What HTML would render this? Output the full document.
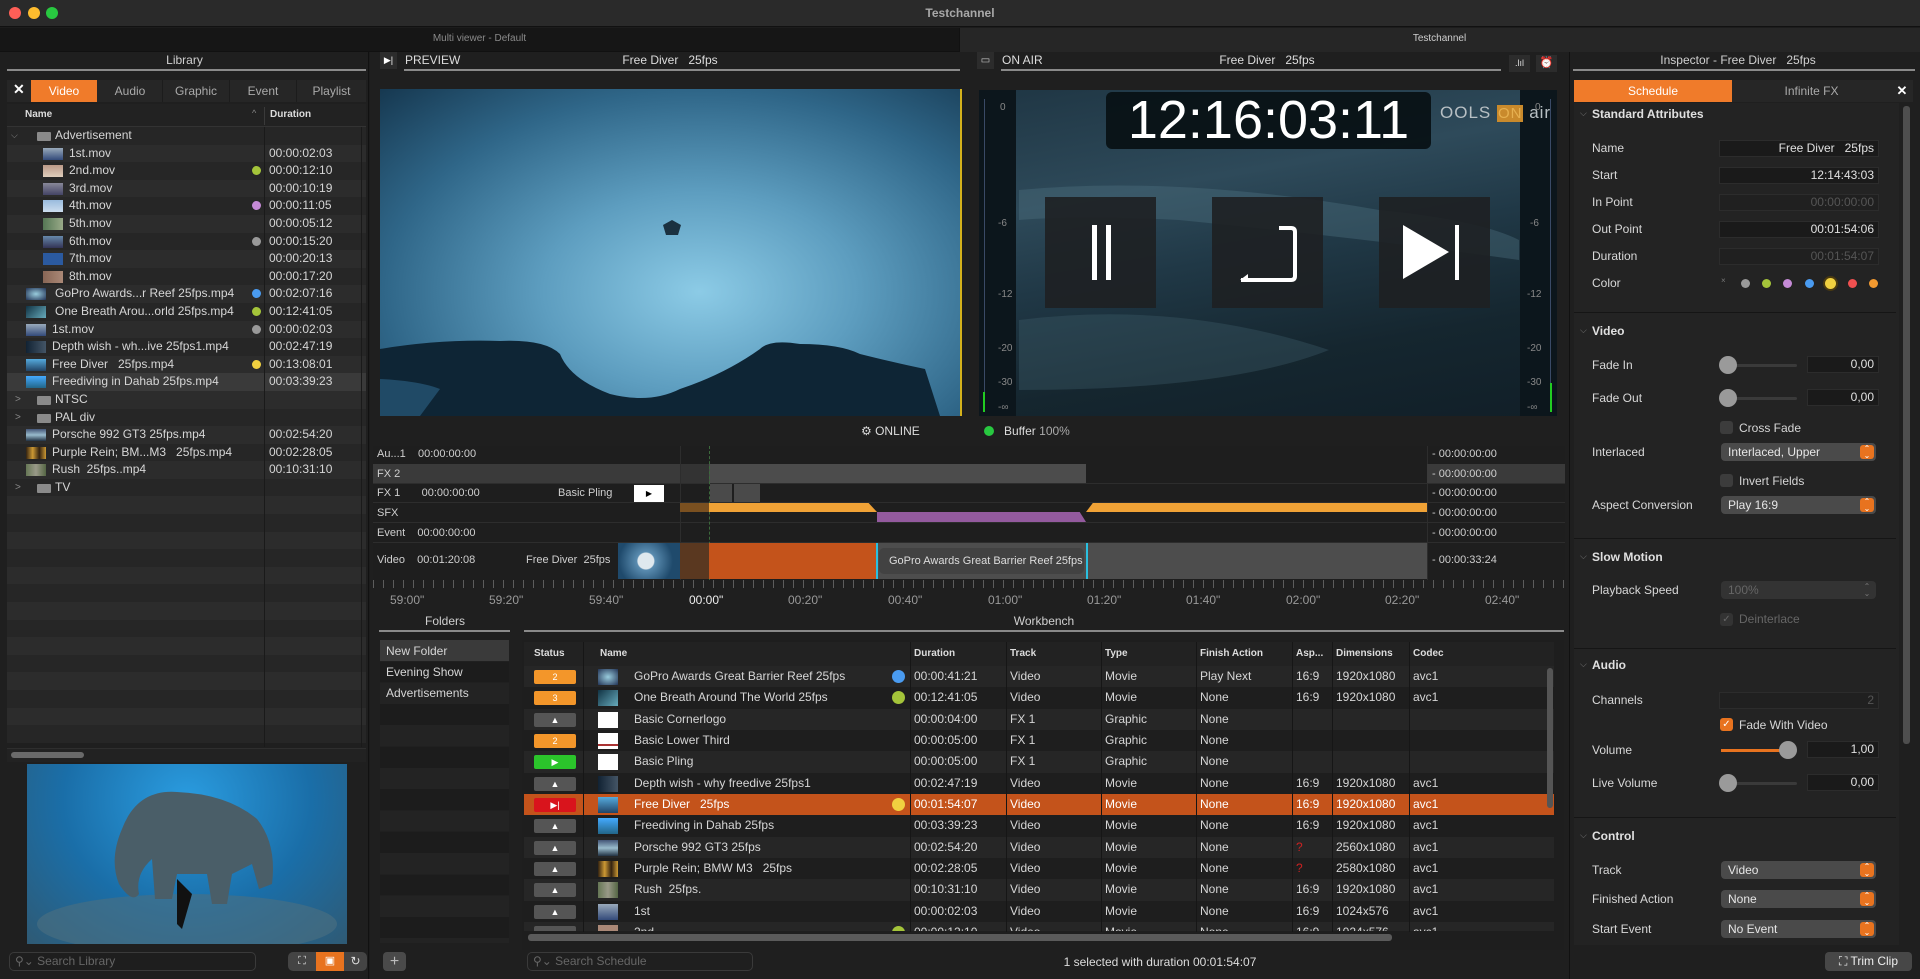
<!DOCTYPE html>
<html><head><meta charset="utf-8">
<style>
*{box-sizing:border-box;margin:0;padding:0}
body{width:1920px;height:979px;overflow:hidden;background:#1c1c1c;font-family:"Liberation Sans",sans-serif;font-size:12px;color:#d6d6d6;position:relative}
.a{position:absolute}
.hdr{position:absolute;text-align:center;color:#d0d0d0;font-size:12px}
.ul{position:absolute;height:2px;background:#8a8a8a}
.lr{height:17.6px;line-height:17.6px;position:relative;white-space:nowrap}
.lr:nth-child(odd){background:#262626}.lr:nth-child(even){background:#2c2c2c}
.lr span{position:absolute}
.th{position:absolute;top:3px;width:20px;height:12px}
.dot{position:absolute;width:9px;height:9px;border-radius:50%;top:4px;left:245px}
.du{left:262px}
.fo{position:absolute;left:30px;top:5px;width:14px;height:9px;background:#8a8a8a;border-radius:1px}
.wr{height:21.33px;line-height:21.33px;position:relative;white-space:nowrap;font-size:12px}
.wr:nth-child(odd){background:#262626}.wr:nth-child(even){background:#1e1e1e}
.wr span{position:absolute}
.bd{position:absolute;left:10px;top:4px;width:42px;height:14px;border-radius:2px;color:#fff;font-size:9px;line-height:14px;text-align:center}
.wt{position:absolute;left:74px;top:3px;width:20px;height:16px}
.lab{position:absolute;left:1592px;color:#d8d8d8;font-size:12px}
.sec{position:absolute;left:1592px;font-weight:bold;color:#e0e0e0;font-size:12px}
.chev{position:absolute;left:1580px;color:#777;font-size:9px}
.fld{position:absolute;left:1719px;width:160px;height:17px;background:#1a1a1a;border:1px solid #2c2c2c;text-align:right;padding-right:4px;line-height:15px;color:#e0e0e0}
.pop{position:absolute;left:1721px;width:155px;height:18px;background:#4a4a4a;border-radius:4px;line-height:18px;padding-left:7px;color:#e6e6e6}
.pop i{position:absolute;right:2px;top:2px;width:14px;height:14px;background:#e8731f;border-radius:3px;font-style:normal;font-size:8px;line-height:7px;text-align:center;color:#fff}
.sl{position:absolute;left:1721px;width:76px;height:3px;background:#3a3a3a;border-radius:2px}
.kn{position:absolute;width:18px;height:18px;border-radius:50%;background:#9a9a9a}
.sep{position:absolute;left:1574px;width:322px;height:1px;background:#151515}
.cb{position:absolute;width:13px;height:13px;border-radius:3px;background:#3c3c3c}
.tl{position:absolute;color:#cfcfcf;font-size:11px}
.rl{position:absolute;top:593px;color:#999;font-size:12px}
</style></head><body>

<div class="a" style="left:0;top:0;width:1920px;height:27px;background:#2a2a2a;border-bottom:1px solid #111"></div>
<div class="a" style="left:9px;top:7px;width:12px;height:12px;border-radius:50%;background:#fe5f57"></div>
<div class="a" style="left:28px;top:7px;width:12px;height:12px;border-radius:50%;background:#febc2e"></div>
<div class="a" style="left:46px;top:7px;width:12px;height:12px;border-radius:50%;background:#28c840"></div>
<div class="a" style="left:0;top:6px;width:1920px;text-align:center;font-weight:bold;color:#a8a8a8;font-size:12px">Testchannel</div>
<div class="a" style="left:0;top:28px;width:959px;height:24px;background:#161616;border-bottom:1px solid #111"></div>
<div class="a" style="left:959px;top:28px;width:961px;height:24px;background:#262626;border-left:1px solid #111"></div>
<div class="a" style="left:0;top:33px;width:959px;text-align:center;color:#8a8a8a;font-size:10px">Multi viewer - Default</div>
<div class="a" style="left:959px;top:33px;width:961px;text-align:center;color:#cfcfcf;font-size:10px">Testchannel</div>

<!-- LIBRARY -->
<div class="a" style="left:0;top:52px;width:369px;height:927px;background:#1f1f1f;border-right:1px solid #111"></div>
<div class="hdr" style="left:0;top:53px;width:369px">Library</div>
<div class="ul" style="left:7px;top:69px;width:359px"></div>
<div class="a" style="left:7px;top:80px;width:359px;height:22px;background:#262626"></div>
<div class="a" style="left:13px;top:81px;color:#fff;font-size:14px;font-weight:bold">✕</div>
<div class="a" style="left:31px;top:80px;width:66px;height:22px;background:#f07b2a;color:#fff;text-align:center;line-height:22px;font-size:12px">Video</div>
<div class="a" style="left:98px;top:80px;width:65px;line-height:22px;text-align:center;color:#aaa;border-right:1px solid #1c1c1c">Audio</div>
<div class="a" style="left:163px;top:80px;width:67px;line-height:22px;text-align:center;color:#aaa;border-right:1px solid #1c1c1c">Graphic</div>
<div class="a" style="left:230px;top:80px;width:67px;line-height:22px;text-align:center;color:#aaa;border-right:1px solid #1c1c1c">Event</div>
<div class="a" style="left:297px;top:80px;width:69px;line-height:22px;text-align:center;color:#aaa">Playlist</div>
<div class="a" style="left:7px;top:104px;width:359px;height:23px;background:#222;border-bottom:1px solid #333"></div>
<div class="a" style="left:25px;top:109px;font-weight:bold;font-size:10px;color:#ddd">Name</div>
<div class="a" style="left:252px;top:108px;font-size:9px;color:#888">^</div>
<div class="a" style="left:264px;top:107px;width:1px;height:18px;background:#3a3a3a"></div>
<div class="a" style="left:270px;top:109px;font-weight:bold;font-size:10px;color:#ddd">Duration</div>

<div class="a" style="left:7px;top:127px;width:359px;font-size:12px">
<div class="lr"><span style="left:4px;color:#888;font-size:9px">⌵</span><div class="fo"></div><span style="left:48px">Advertisement</span></div>
<div class="lr"><div class="th" style="left:36px;background:linear-gradient(#9ab,#334a7a)"></div><span style="left:62px">1st.mov</span><span class="du">00:00:02:03</span></div>
<div class="lr"><div class="th" style="left:36px;background:linear-gradient(#b98,#dcb)"></div><span style="left:62px">2nd.mov</span><div class="dot" style="background:#a4c43a"></div><span class="du">00:00:12:10</span></div>
<div class="lr"><div class="th" style="left:36px;background:linear-gradient(#889,#446)"></div><span style="left:62px">3rd.mov</span><span class="du">00:00:10:19</span></div>
<div class="lr"><div class="th" style="left:36px;background:linear-gradient(#9bd,#cde)"></div><span style="left:62px">4th.mov</span><div class="dot" style="background:#c58ad6"></div><span class="du">00:00:11:05</span></div>
<div class="lr"><div class="th" style="left:36px;background:linear-gradient(90deg,#575,#9a8)"></div><span style="left:62px">5th.mov</span><span class="du">00:00:05:12</span></div>
<div class="lr"><div class="th" style="left:36px;background:linear-gradient(#68a,#335)"></div><span style="left:62px">6th.mov</span><div class="dot" style="background:#999"></div><span class="du">00:00:15:20</span></div>
<div class="lr"><div class="th" style="left:36px;background:#2b5aa0"></div><span style="left:62px">7th.mov</span><span class="du">00:00:20:13</span></div>
<div class="lr"><div class="th" style="left:36px;background:linear-gradient(90deg,#865,#a87)"></div><span style="left:62px">8th.mov</span><span class="du">00:00:17:20</span></div>
<div class="lr"><div class="th" style="left:19px;background:radial-gradient(#9cd,#235)"></div><span style="left:48px">GoPro Awards...r Reef 25fps.mp4</span><div class="dot" style="background:#4a9bf0"></div><span class="du">00:02:07:16</span></div>
<div class="lr"><div class="th" style="left:19px;background:linear-gradient(135deg,#134,#6ab)"></div><span style="left:48px">One Breath Arou...orld 25fps.mp4</span><div class="dot" style="background:#a4c43a"></div><span class="du">00:12:41:05</span></div>
<div class="lr"><div class="th" style="left:19px;background:linear-gradient(#9ab,#334a7a)"></div><span style="left:45px">1st.mov</span><div class="dot" style="background:#999"></div><span class="du">00:00:02:03</span></div>
<div class="lr"><div class="th" style="left:19px;background:linear-gradient(90deg,#123,#456)"></div><span style="left:45px">Depth wish - wh...ive 25fps1.mp4</span><span class="du">00:02:47:19</span></div>
<div class="lr"><div class="th" style="left:19px;background:linear-gradient(#5ad,#246)"></div><span style="left:45px">Free Diver &nbsp; 25fps.mp4</span><div class="dot" style="background:#f0d040"></div><span class="du">00:13:08:01</span></div>
<div class="lr" style="background:#3a3a3a"><div class="th" style="left:19px;background:linear-gradient(#4af,#268)"></div><span style="left:45px">Freediving in Dahab 25fps.mp4</span><span class="du">00:03:39:23</span></div>
<div class="lr"><span style="left:8px;color:#888;font-size:10px">&gt;</span><div class="fo"></div><span style="left:48px">NTSC</span></div>
<div class="lr"><span style="left:8px;color:#888;font-size:10px">&gt;</span><div class="fo"></div><span style="left:48px">PAL div</span></div>
<div class="lr"><div class="th" style="left:19px;background:linear-gradient(#457,#9bc,#234)"></div><span style="left:45px">Porsche 992 GT3 25fps.mp4</span><span class="du">00:02:54:20</span></div>
<div class="lr"><div class="th" style="left:19px;background:linear-gradient(90deg,#321,#c93,#321,#c93)"></div><span style="left:45px">Purple Rein; BM...M3 &nbsp; 25fps.mp4</span><span class="du">00:02:28:05</span></div>
<div class="lr"><div class="th" style="left:19px;background:linear-gradient(90deg,#675,#998,#564)"></div><span style="left:45px">Rush &nbsp;25fps..mp4</span><span class="du">00:10:31:10</span></div>
<div class="lr"><span style="left:8px;color:#888;font-size:10px">&gt;</span><div class="fo"></div><span style="left:48px">TV</span></div>
<div class="lr"></div><div class="lr"></div><div class="lr"></div><div class="lr"></div><div class="lr"></div><div class="lr"></div><div class="lr"></div><div class="lr"></div><div class="lr"></div><div class="lr"></div><div class="lr"></div><div class="lr"></div><div class="lr"></div><div class="lr"></div>
</div>
<div class="a" style="left:264px;top:127px;width:1px;height:620px;background:#1a1a1a"></div>
<div class="a" style="left:361px;top:127px;width:1px;height:620px;background:#1a1a1a"></div>
<div class="a" style="left:7px;top:748px;width:359px;height:14px;background:#222;border-top:1px solid #2e2e2e"></div>
<div class="a" style="left:11px;top:752px;width:73px;height:6px;border-radius:3px;background:#6a6a6a"></div>
<div class="a" style="left:27px;top:764px;width:320px;height:180px;background:radial-gradient(ellipse at 50% 20%,#2a9ce0,#1a6ea8 55%,#2f5a74 100%)"></div>
<svg class="a" style="left:27px;top:764px" width="320" height="180"><ellipse cx="160" cy="160" rx="150" ry="30" fill="#4d6f80" opacity=".6"/><path d="M95 65 Q110 25 150 28 Q200 30 230 55 Q250 80 245 120 L232 125 L225 100 L205 110 L200 140 L185 140 L180 110 L150 110 L145 135 L128 135 L125 95 Q108 110 112 130 Q105 140 92 120 Q82 95 95 65Z" fill="#4a5e68"/><path d="M150 115 L165 130 L155 165 L150 160 Z" fill="#111"/></svg>
<div class="a" style="left:9px;top:952px;width:247px;height:19px;border:1px solid #3a3a3a;border-radius:5px;background:#1e1e1e;color:#666;line-height:17px;padding-left:5px;font-size:12px">⚲⌄ Search Library</div>
<div class="a" style="left:288px;top:952px;width:28px;height:19px;background:#444;border-radius:5px 0 0 5px;color:#ddd;text-align:center;line-height:19px;font-size:11px">⛶</div>
<div class="a" style="left:316px;top:952px;width:28px;height:19px;background:#e8731f;color:#fff;text-align:center;line-height:19px;font-size:11px">▣</div>
<div class="a" style="left:344px;top:952px;width:23px;height:19px;background:#444;border-radius:0 5px 5px 0;color:#ddd;text-align:center;line-height:19px;font-size:12px">↻</div>

<!-- CENTER -->
<div class="a" style="left:370px;top:52px;width:1199px;height:927px;background:#1f1f1f"></div>
<div class="a" style="left:380px;top:52px;width:17px;height:17px;background:#2c2c2c;color:#fff;font-size:9px;text-align:center;line-height:17px">▶|</div>
<div class="a" style="left:405px;top:53px;color:#ddd">PREVIEW</div>
<div class="a" style="left:600px;top:53px;width:140px;text-align:center;color:#ddd">Free Diver &nbsp; 25fps</div>
<div class="ul" style="left:404px;top:69px;width:556px"></div>
<div class="a" style="left:380px;top:89px;width:581px;height:327px;background:radial-gradient(ellipse at 55% 62%,#8ccbe6 0%,#5d9dbf 35%,#2f6688 70%,#163850 100%)"></div>
<svg class="a" style="left:380px;top:89px" width="581" height="327"><path d="M0 260 Q60 250 120 252 Q165 250 180 265 Q190 290 230 305 Q270 315 300 300 Q345 285 380 260 Q390 250 420 255 Q460 255 480 265 Q520 275 545 280 L560 327 L0 327Z" fill="#0e2535"/><path d="M0 290 Q40 292 60 300 L40 327 L0 327Z" fill="#204a66"/><path d="M283 136 L292 131 L301 136 L298 146 L286 146Z" fill="#1b3140"/></svg>
<div class="a" style="left:960px;top:89px;width:2px;height:327px;background:#d4b21c"></div>
<div class="a" style="left:861px;top:424px;color:#ddd;font-size:12px">⚙ ONLINE</div>
<div class="a" style="left:977px;top:52px;width:17px;height:17px;background:#2c2c2c;color:#ccc;font-size:10px;text-align:center;line-height:17px">▭</div>
<div class="a" style="left:1002px;top:53px;color:#ddd">ON AIR</div>
<div class="a" style="left:1197px;top:53px;width:140px;text-align:center;color:#ddd">Free Diver &nbsp; 25fps</div>
<div class="ul" style="left:1001px;top:69px;width:500px"></div>
<div class="a" style="left:1509px;top:55px;width:21px;height:17px;background:#2c2c2c;color:#ddd;font-size:9px;text-align:center;line-height:17px">.lıl</div>
<div class="a" style="left:1536px;top:55px;width:21px;height:17px;background:#2c2c2c;color:#ddd;font-size:11px;text-align:center;line-height:17px">⏰</div>
<div class="a" style="left:979px;top:90px;width:578px;height:326px;background:linear-gradient(170deg,#1f3644 0%,#2e4a5a 30%,#203846 50%,#15262f 75%,#111f28 100%)"></div>
<svg class="a" style="left:979px;top:90px" width="578" height="326"><path d="M40 100 Q200 85 400 120 Q500 130 540 150 L540 170 Q400 150 200 130 Q100 125 40 130Z" fill="#4e7080" opacity=".4"/><path d="M40 230 Q200 210 350 260 Q250 300 40 300Z" fill="#3c5a66" opacity=".4"/></svg>
<div class="a" style="left:979px;top:90px;width:37px;height:326px;background:#0c161c"></div>
<div class="a" style="left:1520px;top:90px;width:37px;height:326px;background:#0c161c"></div>
<div class="a" style="left:984px;top:99px;width:1px;height:313px;background:#3a4a66"></div>
<div class="a" style="left:1550px;top:99px;width:1px;height:313px;background:#3a4a66"></div>
<div class="a" style="left:983px;top:392px;width:2px;height:20px;background:#2c2"></div>
<div class="a" style="left:1550px;top:383px;width:2px;height:29px;background:#2c2"></div>
<div class="tl" style="left:1000px;top:102px;color:#888;font-size:10px">0</div>
<div class="tl" style="left:998px;top:218px;color:#888;font-size:10px">-6</div>
<div class="tl" style="left:998px;top:289px;color:#888;font-size:10px">-12</div>
<div class="tl" style="left:998px;top:343px;color:#888;font-size:10px">-20</div>
<div class="tl" style="left:998px;top:377px;color:#888;font-size:10px">-30</div>
<div class="tl" style="left:998px;top:402px;color:#888;font-size:10px">-∞</div>
<div class="tl" style="left:1535px;top:102px;color:#888;font-size:10px">0</div>
<div class="tl" style="left:1530px;top:218px;color:#888;font-size:10px">-6</div>
<div class="tl" style="left:1527px;top:289px;color:#888;font-size:10px">-12</div>
<div class="tl" style="left:1527px;top:343px;color:#888;font-size:10px">-20</div>
<div class="tl" style="left:1527px;top:377px;color:#888;font-size:10px">-30</div>
<div class="tl" style="left:1527px;top:402px;color:#888;font-size:10px">-∞</div>
<div class="a" style="left:1440px;top:103px;color:#b8c0c4;font-size:17px;letter-spacing:1px">OOLS <span style="background:#c98a2c;color:#e6b050;padding:0 1px;font-size:15px">ON</span> air</div>
<div class="a" style="left:1106px;top:92px;width:325px;height:57px;background:rgba(8,16,20,.92);border-radius:6px;color:#fff;font-size:54px;line-height:57px;text-align:center;font-weight:300">12:16:03:11</div>
<div class="a" style="left:1045px;top:197px;width:111px;height:111px;background:rgba(30,32,34,.9)"></div>
<div class="a" style="left:1092px;top:225px;width:5px;height:55px;background:#fff"></div>
<div class="a" style="left:1106px;top:225px;width:5px;height:55px;background:#fff"></div>
<div class="a" style="left:1212px;top:197px;width:111px;height:111px;background:rgba(30,32,34,.9)"></div>
<svg class="a" style="left:1212px;top:197px" width="111" height="111"><path d="M67 31 H79 Q83 31 83 35 V79 Q83 83 79 83 H29" fill="none" stroke="#fff" stroke-width="4"/><path d="M28 83 L36 77 L36 83Z" fill="#fff"/></svg>
<div class="a" style="left:1379px;top:197px;width:111px;height:111px;background:rgba(30,32,34,.9)"></div>
<svg class="a" style="left:1379px;top:197px" width="111" height="111"><path d="M24 28 L70 55 L24 82Z" fill="#fff"/><rect x="76" y="28" width="4" height="55" fill="#fff"/></svg>
<div class="a" style="left:984px;top:426px;width:10px;height:10px;border-radius:50%;background:#28c840"></div>
<div class="a" style="left:1004px;top:424px;color:#ddd">Buffer <span style="color:#aaa">100%</span></div>

<!-- TIMELINE -->
<div class="a" style="left:373px;top:446px;width:1192px;height:134px;background:#1e1e1e"></div>
<div class="a" style="left:373px;top:464px;width:1192px;height:19px;background:#3c3c3c"></div>
<div class="a" style="left:680px;top:464px;width:30px;height:19px;background:#333"></div>
<div class="a" style="left:709px;top:464px;width:377px;height:19px;background:#4c4c4c"></div>
<div class="a" style="left:1086px;top:464px;width:341px;height:19px;background:#1e1e1e"></div>
<div class="a" style="left:373px;top:464px;width:307px;height:19px;background:#3a3a3a"></div>
<div class="a" style="left:373px;top:483px;width:1192px;height:1px;background:#2d2d2d"></div>
<div class="a" style="left:373px;top:502px;width:1192px;height:1px;background:#2d2d2d"></div>
<div class="a" style="left:373px;top:522px;width:1192px;height:1px;background:#2d2d2d"></div>
<div class="a" style="left:373px;top:542px;width:1192px;height:1px;background:#2d2d2d"></div>
<div class="a" style="left:680px;top:446px;width:1px;height:134px;background:#2d2d2d"></div>
<div class="a" style="left:709px;top:446px;width:1px;height:134px;border-left:1px dashed #3c6a3c"></div>
<div class="a" style="left:1427px;top:446px;width:1px;height:134px;background:#2d2d2d"></div>
<div class="tl" style="left:377px;top:448px">Au...1 &nbsp;&nbsp;&nbsp;00:00:00:00</div>
<div class="tl" style="left:377px;top:468px">FX 2</div>
<div class="tl" style="left:377px;top:487px">FX 1 &nbsp;&nbsp;&nbsp;&nbsp;&nbsp;&nbsp;00:00:00:00</div>
<div class="tl" style="left:558px;top:487px">Basic Pling</div>
<div class="a" style="left:634px;top:485px;width:30px;height:17px;background:#fff;color:#000;font-size:8px;text-align:center;line-height:17px">▶</div>
<div class="a" style="left:710px;top:484px;width:22px;height:18px;background:#4a4a4a"></div>
<div class="a" style="left:734px;top:484px;width:26px;height:18px;background:#4a4a4a"></div>
<div class="tl" style="left:377px;top:507px">SFX</div>
<div class="a" style="left:680px;top:503px;width:29px;height:9px;background:#7a5020"></div>
<div class="a" style="left:709px;top:503px;width:168px;height:9px;background:#f0a236;clip-path:polygon(0 0,95% 0,100% 100%,0 100%)"></div>
<div class="a" style="left:877px;top:512px;width:209px;height:10px;background:#935a9e;clip-path:polygon(0 0,97% 0,100% 100%,0 100%)"></div>
<div class="a" style="left:1086px;top:503px;width:341px;height:9px;background:#f0a236;clip-path:polygon(2% 0,100% 0,100% 100%,0 100%)"></div>
<div class="tl" style="left:377px;top:527px">Event &nbsp;&nbsp;&nbsp;00:00:00:00</div>
<div class="tl" style="left:377px;top:554px">Video &nbsp;&nbsp;&nbsp;00:01:20:08</div>
<div class="tl" style="left:526px;top:554px">Free Diver &nbsp;25fps</div>
<div class="a" style="left:618px;top:543px;width:62px;height:36px;background:radial-gradient(circle at 45% 50%,#dfe8ee 0 8px,#5a8cb0 9px,#1f4a6c 70%)"></div>
<div class="a" style="left:680px;top:543px;width:29px;height:36px;background:#5a3820"></div>
<div class="a" style="left:709px;top:543px;width:168px;height:36px;background:#c4531b"></div>
<div class="a" style="left:877px;top:543px;width:550px;height:36px;background:#4d4d4d"></div>
<div class="a" style="left:879px;top:548px;width:205px;height:26px;background:#424242;border-radius:5px;color:#ddd;font-size:11px;line-height:26px;padding-left:10px">GoPro Awards Great Barrier Reef 25fps</div>
<div class="a" style="left:875px;top:543px;width:3px;height:36px;border-right:2px solid #2ac0e0"></div>
<div class="a" style="left:1086px;top:543px;width:12px;height:36px;border-left:2px solid #2ac0e0"></div>
<div class="tl" style="left:1432px;top:448px">- 00:00:00:00</div>
<div class="a" style="left:1427px;top:464px;width:138px;height:19px;background:#3a3a3a"></div>
<div class="tl" style="left:1432px;top:468px">- 00:00:00:00</div>
<div class="tl" style="left:1432px;top:487px">- 00:00:00:00</div>
<div class="tl" style="left:1432px;top:507px">- 00:00:00:00</div>
<div class="tl" style="left:1432px;top:527px">- 00:00:00:00</div>
<div class="tl" style="left:1432px;top:554px">- 00:00:33:24</div>
<div class="a" style="left:373px;top:580px;width:1192px;height:8px;background:repeating-linear-gradient(90deg,#777 0 1px,transparent 1px 10px);opacity:.7"></div>
<div class="rl" style="left:390px">59:00"</div>
<div class="rl" style="left:489px">59:20"</div>
<div class="rl" style="left:589px">59:40"</div>
<div class="rl" style="left:689px;color:#eee">00:00"</div>
<div class="rl" style="left:788px">00:20"</div>
<div class="rl" style="left:888px">00:40"</div>
<div class="rl" style="left:988px">01:00"</div>
<div class="rl" style="left:1087px">01:20"</div>
<div class="rl" style="left:1186px">01:40"</div>
<div class="rl" style="left:1286px">02:00"</div>
<div class="rl" style="left:1385px">02:20"</div>
<div class="rl" style="left:1485px">02:40"</div>

<!-- FOLDERS -->
<div class="hdr" style="left:380px;top:614px;width:130px">Folders</div>
<div class="ul" style="left:379px;top:630px;width:131px"></div>
<div class="a" style="left:380px;top:640px;width:129px;height:303px;background:repeating-linear-gradient(#232323 0 21.3px,#1c1c1c 21.3px 42.6px)"></div>
<div class="a" style="left:380px;top:640px;width:129px;height:21px;background:#3a3a3a"></div>
<div class="a" style="left:386px;top:644px">New Folder</div>
<div class="a" style="left:386px;top:665px">Evening Show</div>
<div class="a" style="left:386px;top:686px">Advertisements</div>
<div class="a" style="left:383px;top:952px;width:23px;height:19px;background:#4a4a4a;border-radius:4px;color:#bbb;text-align:center;line-height:19px;font-size:16px">+</div>

<!-- WORKBENCH -->
<div class="hdr" style="left:524px;top:614px;width:1040px">Workbench</div>
<div class="ul" style="left:524px;top:630px;width:1040px"></div>
<div class="a" style="left:522px;top:640px;width:1042px;height:310px;background:#1e1e1e"></div>
<div class="a" style="left:524px;top:642px;width:1030px;height:24px;background:#222;font-weight:bold;font-size:10px;color:#ddd;line-height:24px">
<span class="a" style="left:10px">Status</span><span class="a" style="left:76px">Name</span><span class="a" style="left:390px">Duration</span><span class="a" style="left:486px">Track</span><span class="a" style="left:581px">Type</span><span class="a" style="left:676px">Finish Action</span><span class="a" style="left:772px">Asp...</span><span class="a" style="left:812px">Dimensions</span><span class="a" style="left:889px">Codec</span></div>
<div class="a" style="left:524px;top:666px;width:1030px;height:265px;overflow:hidden">
<div class="wr"><div class="bd" style="background:#f3962a">2</div><div class="wt" style="background:radial-gradient(#9cd,#235)"></div><span style="left:110px">GoPro Awards Great Barrier Reef 25fps</span><span style="left:368px;top:4px;width:13px;height:13px;border-radius:50%;background:#4a9bf0"></span><span style="left:390px">00:00:41:21</span><span style="left:486px">Video</span><span style="left:581px">Movie</span><span style="left:676px">Play Next</span><span style="left:772px">16:9</span><span style="left:812px">1920x1080</span><span style="left:889px">avc1</span></div>
<div class="wr"><div class="bd" style="background:#f3962a">3</div><div class="wt" style="background:linear-gradient(135deg,#134,#6ab)"></div><span style="left:110px">One Breath Around The World 25fps</span><span style="left:368px;top:4px;width:13px;height:13px;border-radius:50%;background:#a4c43a"></span><span style="left:390px">00:12:41:05</span><span style="left:486px">Video</span><span style="left:581px">Movie</span><span style="left:676px">None</span><span style="left:772px">16:9</span><span style="left:812px">1920x1080</span><span style="left:889px">avc1</span></div>
<div class="wr"><div class="bd" style="background:#555">▲</div><div class="wt" style="background:#fff"></div><span style="left:110px">Basic Cornerlogo</span><span style="left:390px">00:00:04:00</span><span style="left:486px">FX 1</span><span style="left:581px">Graphic</span><span style="left:676px">None</span></div>
<div class="wr"><div class="bd" style="background:#f3962a">2</div><div class="wt" style="background:linear-gradient(#fff 70%,#a33 70% 80%,#fff 80%)"></div><span style="left:110px">Basic Lower Third</span><span style="left:390px">00:00:05:00</span><span style="left:486px">FX 1</span><span style="left:581px">Graphic</span><span style="left:676px">None</span></div>
<div class="wr"><div class="bd" style="background:#2bc42b">▶</div><div class="wt" style="background:#fff"></div><span style="left:110px">Basic Pling</span><span style="left:390px">00:00:05:00</span><span style="left:486px">FX 1</span><span style="left:581px">Graphic</span><span style="left:676px">None</span></div>
<div class="wr"><div class="bd" style="background:#555">▲</div><div class="wt" style="background:linear-gradient(90deg,#123,#456)"></div><span style="left:110px">Depth wish - why freedive 25fps1</span><span style="left:390px">00:02:47:19</span><span style="left:486px">Video</span><span style="left:581px">Movie</span><span style="left:676px">None</span><span style="left:772px">16:9</span><span style="left:812px">1920x1080</span><span style="left:889px">avc1</span></div>
<div class="wr" style="background:#c4531b;color:#fff"><div class="bd" style="background:#d9141c">▶|</div><div class="wt" style="background:linear-gradient(#5ad,#246)"></div><span style="left:110px">Free Diver &nbsp; 25fps</span><span style="left:368px;top:4px;width:13px;height:13px;border-radius:50%;background:#f0d040"></span><span style="left:390px">00:01:54:07</span><span style="left:486px">Video</span><span style="left:581px">Movie</span><span style="left:676px">None</span><span style="left:772px">16:9</span><span style="left:812px">1920x1080</span><span style="left:889px">avc1</span></div>
<div class="wr"><div class="bd" style="background:#555">▲</div><div class="wt" style="background:linear-gradient(#4af,#268)"></div><span style="left:110px">Freediving in Dahab 25fps</span><span style="left:390px">00:03:39:23</span><span style="left:486px">Video</span><span style="left:581px">Movie</span><span style="left:676px">None</span><span style="left:772px">16:9</span><span style="left:812px">1920x1080</span><span style="left:889px">avc1</span></div>
<div class="wr"><div class="bd" style="background:#555">▲</div><div class="wt" style="background:linear-gradient(#457,#9bc,#234)"></div><span style="left:110px">Porsche 992 GT3 25fps</span><span style="left:390px">00:02:54:20</span><span style="left:486px">Video</span><span style="left:581px">Movie</span><span style="left:676px">None</span><span style="left:772px;color:#c22">?</span><span style="left:812px">2560x1080</span><span style="left:889px">avc1</span></div>
<div class="wr"><div class="bd" style="background:#555">▲</div><div class="wt" style="background:linear-gradient(90deg,#321,#c93,#321,#c93)"></div><span style="left:110px">Purple Rein; BMW M3 &nbsp; 25fps</span><span style="left:390px">00:02:28:05</span><span style="left:486px">Video</span><span style="left:581px">Movie</span><span style="left:676px">None</span><span style="left:772px;color:#c22">?</span><span style="left:812px">2580x1080</span><span style="left:889px">avc1</span></div>
<div class="wr"><div class="bd" style="background:#555">▲</div><div class="wt" style="background:linear-gradient(90deg,#675,#998,#564)"></div><span style="left:110px">Rush &nbsp;25fps.</span><span style="left:390px">00:10:31:10</span><span style="left:486px">Video</span><span style="left:581px">Movie</span><span style="left:676px">None</span><span style="left:772px">16:9</span><span style="left:812px">1920x1080</span><span style="left:889px">avc1</span></div>
<div class="wr"><div class="bd" style="background:#555">▲</div><div class="wt" style="background:linear-gradient(#9ab,#334a7a)"></div><span style="left:110px">1st</span><span style="left:390px">00:00:02:03</span><span style="left:486px">Video</span><span style="left:581px">Movie</span><span style="left:676px">None</span><span style="left:772px">16:9</span><span style="left:812px">1024x576</span><span style="left:889px">avc1</span></div>
<div class="wr"><div class="bd" style="background:#555"></div><div class="wt" style="background:#a87"></div><span style="left:110px">2nd</span><span style="left:368px;top:4px;width:13px;height:13px;border-radius:50%;background:#a4c43a"></span><span style="left:390px">00:00:12:10</span><span style="left:486px">Video</span><span style="left:581px">Movie</span><span style="left:676px">None</span><span style="left:772px">16:9</span><span style="left:812px">1024x576</span><span style="left:889px">avc1</span></div>
</div>
<div class="a" style="left:583px;top:642px;width:1px;height:290px;background:#161616"></div>
<div class="a" style="left:910px;top:642px;width:1px;height:290px;background:#161616"></div>
<div class="a" style="left:1006px;top:642px;width:1px;height:290px;background:#161616"></div>
<div class="a" style="left:1101px;top:642px;width:1px;height:290px;background:#161616"></div>
<div class="a" style="left:1196px;top:642px;width:1px;height:290px;background:#161616"></div>
<div class="a" style="left:1292px;top:642px;width:1px;height:290px;background:#161616"></div>
<div class="a" style="left:1332px;top:642px;width:1px;height:290px;background:#161616"></div>
<div class="a" style="left:1409px;top:642px;width:1px;height:290px;background:#161616"></div>
<div class="a" style="left:1547px;top:668px;width:6px;height:140px;border-radius:3px;background:#555"></div>
<div class="a" style="left:528px;top:934px;width:864px;height:7px;border-radius:3px;background:#5a5a5a"></div>
<div class="a" style="left:527px;top:952px;width:226px;height:19px;border:1px solid #3a3a3a;border-radius:5px;color:#666;line-height:17px;padding-left:5px">⚲⌄ Search Schedule</div>
<div class="a" style="left:900px;top:955px;width:520px;text-align:center;color:#ddd">1 selected with duration 00:01:54:07</div>

<!-- INSPECTOR -->
<div class="a" style="left:1569px;top:52px;width:351px;height:927px;background:#1f1f1f;border-left:1px solid #111"></div>
<div class="hdr" style="left:1573px;top:53px;width:330px">Inspector - Free Diver &nbsp; 25fps</div>
<div class="ul" style="left:1573px;top:69px;width:342px"></div>
<div class="a" style="left:1574px;top:80px;width:158px;height:22px;background:#f07b2a;color:#fff;text-align:center;line-height:22px">Schedule</div>
<div class="a" style="left:1732px;top:80px;width:159px;height:22px;background:#262626;color:#aaa;text-align:center;line-height:22px">Infinite FX</div>
<div class="a" style="left:1891px;top:80px;width:22px;height:22px;background:#262626;color:#fff;text-align:center;line-height:22px;font-size:13px;font-weight:bold">✕</div>
<div class="a" style="left:1574px;top:103px;width:325px;height:842px;background:#232323"></div>
<div class="a" style="left:1903px;top:106px;width:7px;height:638px;border-radius:3px;background:#4e4e4e"></div>

<div class="chev" style="top:108px">⌵</div><div class="sec" style="top:107px">Standard Attributes</div>
<div class="lab" style="top:141px">Name</div><div class="fld" style="top:140px">Free Diver &nbsp; 25fps</div>
<div class="lab" style="top:168px">Start</div><div class="fld" style="top:167px">12:14:43:03</div>
<div class="lab" style="top:195px">In Point</div><div class="fld" style="top:194px;color:#555;background:#202020">00:00:00:00</div>
<div class="lab" style="top:222px">Out Point</div><div class="fld" style="top:221px">00:01:54:06</div>
<div class="lab" style="top:249px">Duration</div><div class="fld" style="top:248px;color:#555;background:#202020">00:01:54:07</div>
<div class="lab" style="top:276px">Color</div>
<div class="a" style="left:1721px;top:276px;color:#777;font-size:8px">×</div>
<div class="a" style="left:1741px;top:279px;width:9px;height:9px;border-radius:50%;background:#999"></div>
<div class="a" style="left:1762px;top:279px;width:9px;height:9px;border-radius:50%;background:#a4c43a"></div>
<div class="a" style="left:1783px;top:279px;width:9px;height:9px;border-radius:50%;background:#c58ad6"></div>
<div class="a" style="left:1805px;top:279px;width:9px;height:9px;border-radius:50%;background:#4a9bf0"></div>
<div class="a" style="left:1825px;top:278px;width:11px;height:11px;border-radius:50%;background:#f0d040;box-shadow:0 0 0 2px #4a3a10"></div>
<div class="a" style="left:1848px;top:279px;width:9px;height:9px;border-radius:50%;background:#f05050"></div>
<div class="a" style="left:1869px;top:279px;width:9px;height:9px;border-radius:50%;background:#f39a30"></div>
<div class="sep" style="top:312px"></div>

<div class="chev" style="top:325px">⌵</div><div class="sec" style="top:324px">Video</div>
<div class="lab" style="top:358px">Fade In</div><div class="sl" style="top:364px"></div><div class="kn" style="left:1719px;top:356px"></div><div class="fld" style="left:1807px;width:72px;top:356px">0,00</div>
<div class="lab" style="top:391px">Fade Out</div><div class="sl" style="top:397px"></div><div class="kn" style="left:1719px;top:389px"></div><div class="fld" style="left:1807px;width:72px;top:389px">0,00</div>
<div class="cb" style="left:1720px;top:421px"></div><div class="a" style="left:1739px;top:421px">Cross Fade</div>
<div class="lab" style="top:445px">Interlaced</div><div class="pop" style="top:443px">Interlaced, Upper<i>⌃<br>⌄</i></div>
<div class="cb" style="left:1720px;top:474px"></div><div class="a" style="left:1739px;top:474px">Invert Fields</div>
<div class="lab" style="top:498px">Aspect Conversion</div><div class="pop" style="top:496px">Play 16:9<i>⌃<br>⌄</i></div>
<div class="sep" style="top:538px"></div>

<div class="chev" style="top:551px">⌵</div><div class="sec" style="top:550px">Slow Motion</div>
<div class="lab" style="top:583px">Playback Speed</div><div class="pop" style="top:581px;background:#333;color:#666">100%<i style="background:none;color:#777">⌃<br>⌄</i></div>
<div class="cb" style="left:1720px;top:613px;background:#333;color:#666;font-size:10px;text-align:center;line-height:13px">✓</div><div class="a" style="left:1739px;top:612px;color:#666">Deinterlace</div>
<div class="sep" style="top:648px"></div>

<div class="chev" style="top:659px">⌵</div><div class="sec" style="top:658px">Audio</div>
<div class="lab" style="top:693px">Channels</div><div class="fld" style="top:692px;color:#555;background:#202020">2</div>
<div class="cb" style="left:1720px;top:718px;background:#e8731f;color:#fff;font-size:10px;text-align:center;line-height:13px">✓</div><div class="a" style="left:1739px;top:718px">Fade With Video</div>
<div class="lab" style="top:743px">Volume</div><div class="a" style="left:1721px;top:749px;width:62px;height:3px;background:#e8731f"></div><div class="a" style="left:1783px;top:749px;width:14px;height:3px;background:#3a3a3a"></div><div class="kn" style="left:1779px;top:741px"></div><div class="fld" style="left:1807px;width:72px;top:741px">1,00</div>
<div class="lab" style="top:776px">Live Volume</div><div class="sl" style="top:782px"></div><div class="kn" style="left:1719px;top:774px"></div><div class="fld" style="left:1807px;width:72px;top:774px">0,00</div>
<div class="sep" style="top:817px"></div>

<div class="chev" style="top:830px">⌵</div><div class="sec" style="top:829px">Control</div>
<div class="lab" style="top:863px">Track</div><div class="pop" style="top:861px">Video<i>⌃<br>⌄</i></div>
<div class="lab" style="top:892px">Finished Action</div><div class="pop" style="top:890px">None<i>⌃<br>⌄</i></div>
<div class="lab" style="top:922px">Start Event</div><div class="pop" style="top:920px">No Event<i>⌃<br>⌄</i></div>
<div class="a" style="left:1825px;top:952px;width:87px;height:19px;background:#474747;border-radius:4px;color:#eee;text-align:center;line-height:19px">⛶ Trim Clip</div>
</body></html>
